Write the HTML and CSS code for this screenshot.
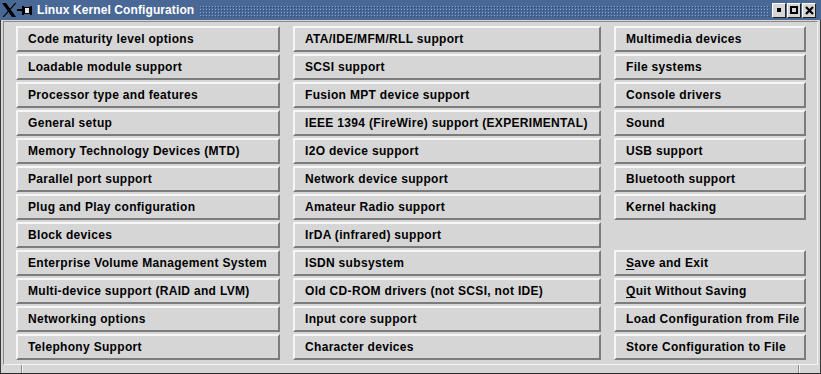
FILE: index.html
```html
<!DOCTYPE html>
<html>
<head>
<meta charset="utf-8">
<link rel="stylesheet" href="styles.css">
</head>
<body>
<div class="window">
  <div class="titlebar">
    <svg class="wm-icon" width="34" height="20" viewBox="0 0 34 20">
      <path d="M2 3 L6 3 L16 17 L12 17 Z" fill="#000"/>
      <path d="M15 3 L16.5 3 L4 17 L2.5 17 Z" fill="#000"/>
      <rect x="17" y="9" width="6" height="2" fill="#000"/>
      <rect x="22" y="6" width="2" height="9" fill="#000"/>
      <rect x="24.5" y="7.5" width="5" height="6" fill="#e8e8e8" stroke="#000" stroke-width="1"/>
      <rect x="30" y="6" width="2" height="9" fill="#000"/>
    </svg>
    <span class="title">Linux Kernel Configuration</span>
    <div class="dots">
      <svg width="100%" height="100%">
        <defs>
          <pattern id="dp" width="3" height="3" patternUnits="userSpaceOnUse">
            <rect x="1" y="1" width="1" height="1" fill="#86a5dc"/>
            <rect x="2" y="2" width="1" height="1" fill="#2f4870"/>
          </pattern>
        </defs>
        <rect width="100%" height="100%" fill="url(#dp)"/>
      </svg>
    </div>
    <div class="wm-buttons">
      <div class="wm-btn"><span class="ico-min"></span></div>
      <div class="wm-btn"><span class="ico-max"></span></div>
      <div class="wm-btn">
        <svg width="9" height="9" viewBox="0 0 9 9"><path d="M1 1 L8 8 M8 1 L1 8" stroke="#000" stroke-width="2.2"/></svg>
      </div>
    </div>
  </div>
  <div class="body">
    <div class="panel">
      <div class="grid">
        <div class="btn">Code maturity level options</div>
        <div class="btn">ATA/IDE/MFM/RLL support</div>
        <div class="btn">Multimedia devices</div>

        <div class="btn">Loadable module support</div>
        <div class="btn">SCSI support</div>
        <div class="btn">File systems</div>

        <div class="btn">Processor type and features</div>
        <div class="btn">Fusion MPT device support</div>
        <div class="btn">Console drivers</div>

        <div class="btn">General setup</div>
        <div class="btn">IEEE 1394 (FireWire) support (EXPERIMENTAL)</div>
        <div class="btn">Sound</div>

        <div class="btn">Memory Technology Devices (MTD)</div>
        <div class="btn">I2O device support</div>
        <div class="btn">USB support</div>

        <div class="btn">Parallel port support</div>
        <div class="btn">Network device support</div>
        <div class="btn">Bluetooth support</div>

        <div class="btn">Plug and Play configuration</div>
        <div class="btn">Amateur Radio support</div>
        <div class="btn">Kernel hacking</div>

        <div class="btn">Block devices</div>
        <div class="btn">IrDA (infrared) support</div>
        <div class="empty"></div>

        <div class="btn">Enterprise Volume Management System</div>
        <div class="btn">ISDN subsystem</div>
        <div class="btn"><span><u>S</u>ave and Exit</span></div>

        <div class="btn">Multi-device support (RAID and LVM)</div>
        <div class="btn">Old CD-ROM drivers (not SCSI, not IDE)</div>
        <div class="btn"><span><u>Q</u>uit Without Saving</span></div>

        <div class="btn">Networking options</div>
        <div class="btn">Input core support</div>
        <div class="btn">Load Configuration from File</div>

        <div class="btn">Telephony Support</div>
        <div class="btn">Character devices</div>
        <div class="btn">Store Configuration to File</div>
      </div>
    </div>
    <div class="bottom">
      <div class="corner-l"></div>
      <div class="mid"></div>
      <div class="corner-r"></div>
    </div>
  </div>
</div>
</body>
</html>
```

FILE: styles.css
```css
html, body {
  margin: 0;
  padding: 0;
  background: #d6d6d6;
  overflow: hidden;
}

.window {
  width: 821px;
  height: 374px;
  box-sizing: border-box;
  display: flex;
  flex-direction: column;
  background: #d6d6d6;
  border-left: 1px solid #3a3a3a;
  border-right: 1px solid #3a3a3a;
  border-bottom: 1px solid #2a2a2a;
}

.titlebar {
  height: 20px;
  flex: none;
  display: flex;
  align-items: center;
  background: #4a6896;
  margin-left: -1px;
  margin-right: -1px;
}

.wm-icon {
  flex: none;
  margin-left: 0;
}

.title {
  flex: none;
  margin-left: 3px;
  color: #ffffff;
  font-family: "Liberation Sans", Arial, sans-serif;
  font-weight: bold;
  font-size: 12px;
  letter-spacing: 0.1px;
  line-height: 20px;
  white-space: nowrap;
}

.dots {
  flex: 1;
  height: 12px;
  margin: 0 3px 0 5px;
  align-self: flex-start;
  margin-top: 5px;
}

.dots svg {
  display: block;
}

.wm-buttons {
  flex: none;
  display: flex;
  gap: 1px;
  margin-right: 5px;
}

.wm-btn {
  width: 14px;
  height: 15px;
  box-sizing: border-box;
  background: #d6d6d6;
  border: 1px solid;
  border-color: #ffffff #202020 #202020 #ffffff;
  display: flex;
  align-items: center;
  justify-content: center;
}

.ico-min {
  width: 4px;
  height: 4px;
  background: #000;
}

.ico-max {
  width: 8px;
  height: 8px;
  box-sizing: border-box;
  border: 2px solid #000;
}

.body {
  flex: 1;
  display: flex;
  flex-direction: column;
  padding: 1px 2px 0 2px;
}

.panel {
  flex: 1;
  border: 1px solid;
  border-color: #8a8a8a #f4f4f4 #f4f4f4 #8a8a8a;
  padding: 4px 10px 4px 12px;
}

.grid {
  display: grid;
  grid-template-columns: 264px 308px 192px;
  grid-auto-rows: 26px;
  column-gap: 13px;
  row-gap: 2px;
}

.btn {
  box-sizing: border-box;
  border-style: solid;
  border-width: 2px;
  border-color: #f6f6f6 #7c7c7c #7c7c7c #f6f6f6;
  background: #d6d6d6;
  display: flex;
  align-items: center;
  padding: 0 0 0 10px;
  font-family: "Liberation Sans", Arial, sans-serif;
  font-weight: bold;
  font-size: 12px;
  letter-spacing: 0.32px;
  color: #000;
  white-space: nowrap;
}

.btn u {
  text-decoration-thickness: 1px;
  text-underline-offset: 2px;
}

.bottom {
  height: 8px;
  flex: none;
  display: flex;
}

.corner-l {
  width: 18px;
  border-right: 1px solid #8a8a8a;
  box-shadow: 1px 0 0 #f4f4f4;
}

.mid {
  flex: 1;
}

.corner-r {
  width: 18px;
  border-left: 1px solid #f4f4f4;
  box-shadow: -1px 0 0 #8a8a8a;
}
```
